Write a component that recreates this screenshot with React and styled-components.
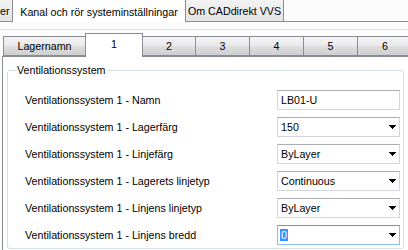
import React from 'react';
import styled, { createGlobalStyle } from 'styled-components';

const GlobalStyle = createGlobalStyle`
  html, body {
    margin: 0;
    padding: 0;
    background: #fcfcfc;
    overflow: hidden;
  }
  body {
    font-family: "Liberation Sans", Arial, sans-serif;
    font-size: 10.7px;
    color: #000;
  }
`;

const Window = styled.div`
  width: 408px;
  height: 250px;
  overflow: hidden;
  display: flex;
  flex-direction: column;
  background: #fcfcfc;
`;

const OuterTabBar = styled.div`
  display: flex;
  align-items: flex-end;
  height: 21px;
  flex-shrink: 0;
`;

const OuterTab = styled.div`
  box-sizing: border-box;
  width: ${p => p.$w}px;
  height: ${p => (p.$active ? 23 : 22)}px;
  margin-bottom: ${p => (p.$active ? -1 : 0)}px;
  margin-left: -1px;
  position: relative;
  z-index: ${p => (p.$active ? 1 : 0)};
  display: flex;
  align-items: center;
  justify-content: ${p => (p.$cut ? 'flex-start' : 'center')};
  padding-top: 1px;
  border: 1px solid #898c95;
  border-bottom: none;
  background: ${p => (p.$active ? '#fff' : 'linear-gradient(#f3f3f3, #e4e4e4)')};
  white-space: nowrap;
`;

const OuterPage = styled.div`
  flex: 1;
  display: flex;
  flex-direction: column;
  border-top: 1px solid #898c95;
  background: #fcfcfc;
`;

const PageStrip = styled.div`
  height: 7px;
  flex-shrink: 0;
  border-bottom: 1px solid #dcdcdc;
`;

const InnerTabBar = styled.div`
  display: flex;
  align-items: flex-end;
  height: 26px;
  flex-shrink: 0;
  padding-left: 3px;
`;

const InnerTab = styled.div`
  box-sizing: border-box;
  flex-shrink: 0;
  width: ${p => p.$w}px;
  height: ${p => (p.$active ? 24 : 20)}px;
  margin-bottom: ${p => (p.$active ? -1 : 0)}px;
  margin-left: ${p => (p.$first ? 0 : -1)}px;
  position: relative;
  z-index: ${p => (p.$active ? 1 : 0)};
  display: flex;
  align-items: center;
  justify-content: center;
  padding-bottom: ${p => (p.$active ? 3 : 0)}px;
  border: 1px solid #898c95;
  border-bottom: ${p => (p.$active ? 'none' : '1px solid #898c95')};
  background: ${p =>
    p.$active
      ? '#fff'
      : 'linear-gradient(#f3f3f3 0%, #ebebeb 45%, #dddddd 55%, #cfcfcf 100%)'};
`;

const InnerPage = styled.div`
  flex: 1;
  margin-left: 2px;
  border-top: 1px solid #898c95;
  border-left: 1px solid #898c95;
  background: #fff;
  display: flex;
  flex-direction: column;
`;

const GroupBox = styled.fieldset`
  margin: 7px 4px 0 4px;
  padding: 0;
  border: 1px solid #d5dfe5;
  border-radius: 3px;
  min-width: 0;
`;

const GroupTitle = styled.legend`
  margin-left: 8px;
  padding: 0 1px;
  line-height: 13px;
`;

const Rows = styled.div`
  display: grid;
  grid-template-columns: 1fr 123px;
  grid-auto-rows: 27px;
  align-items: center;
  padding: 9px 3px 0 17px;
`;

const Label = styled.div`
  white-space: nowrap;
`;

const Field = styled.div`
  box-sizing: border-box;
  height: 20px;
  display: flex;
  align-items: center;
  justify-content: space-between;
  padding: 0 3px 0 3px;
  background: #fff;
  border: 1px solid ${p => (p.$focused ? '#8fbde9' : '#d3d6dc')};
  border-top-color: ${p => (p.$focused ? '#569de5' : '#abadb3')};
`;

const Selected = styled.span`
  background: #3399ff;
  color: #fff;
  padding: 0 1px;
  margin-left: -1px;
`;

const Arrow = styled.svg`
  display: block;
  width: 7px;
  height: 4px;
  margin-top: 1px;
`;

const DropArrow = () => (
  <Arrow viewBox="0 0 7 4" shapeRendering="crispEdges">
    <polygon points="0,0 7,0 3.5,4" fill="#000" />
  </Arrow>
);

const rows = [
  { label: 'Namn', value: 'LB01-U', combo: false },
  { label: 'Lagerfärg', value: '150', combo: true },
  { label: 'Linjefärg', value: 'ByLayer', combo: true },
  { label: 'Lagerets linjetyp', value: 'Continuous', combo: true },
  { label: 'Linjens linjetyp', value: 'ByLayer', combo: true },
  { label: 'Linjens bredd', value: '0', combo: true, focused: true },
];

const innerTabs = [
  { name: 'Lagernamn', w: 83 },
  { name: '1', w: 58, active: true },
  { name: '2', w: 54 },
  { name: '3', w: 55 },
  { name: '4', w: 55 },
  { name: '5', w: 55 },
  { name: '6', w: 56 },
];

export default function App() {
  return (
    <>
      <GlobalStyle />
      <Window>
        <OuterTabBar>
          <OuterTab $w={14} $cut>er</OuterTab>
          <OuterTab $w={174} $active>Kanal och rör systeminställningar</OuterTab>
          <OuterTab $w={99}>Om CADdirekt VVS</OuterTab>
        </OuterTabBar>
        <OuterPage>
          <PageStrip />
          <InnerTabBar>
            {innerTabs.map((t, i) => (
              <InnerTab key={t.name} $w={t.w} $active={t.active} $first={i === 0}>
                {t.name}
              </InnerTab>
            ))}
          </InnerTabBar>
          <InnerPage>
            <GroupBox>
              <GroupTitle>Ventilationssystem</GroupTitle>
              <Rows>
                {rows.map(r => (
                  <React.Fragment key={r.label}>
                    <Label>Ventilationssystem 1 - {r.label}</Label>
                    <Field $focused={r.focused}>
                      {r.focused ? <Selected>{r.value}</Selected> : <span>{r.value}</span>}
                      {r.combo && <DropArrow />}
                    </Field>
                  </React.Fragment>
                ))}
              </Rows>
            </GroupBox>
          </InnerPage>
        </OuterPage>
      </Window>
    </>
  );
}
